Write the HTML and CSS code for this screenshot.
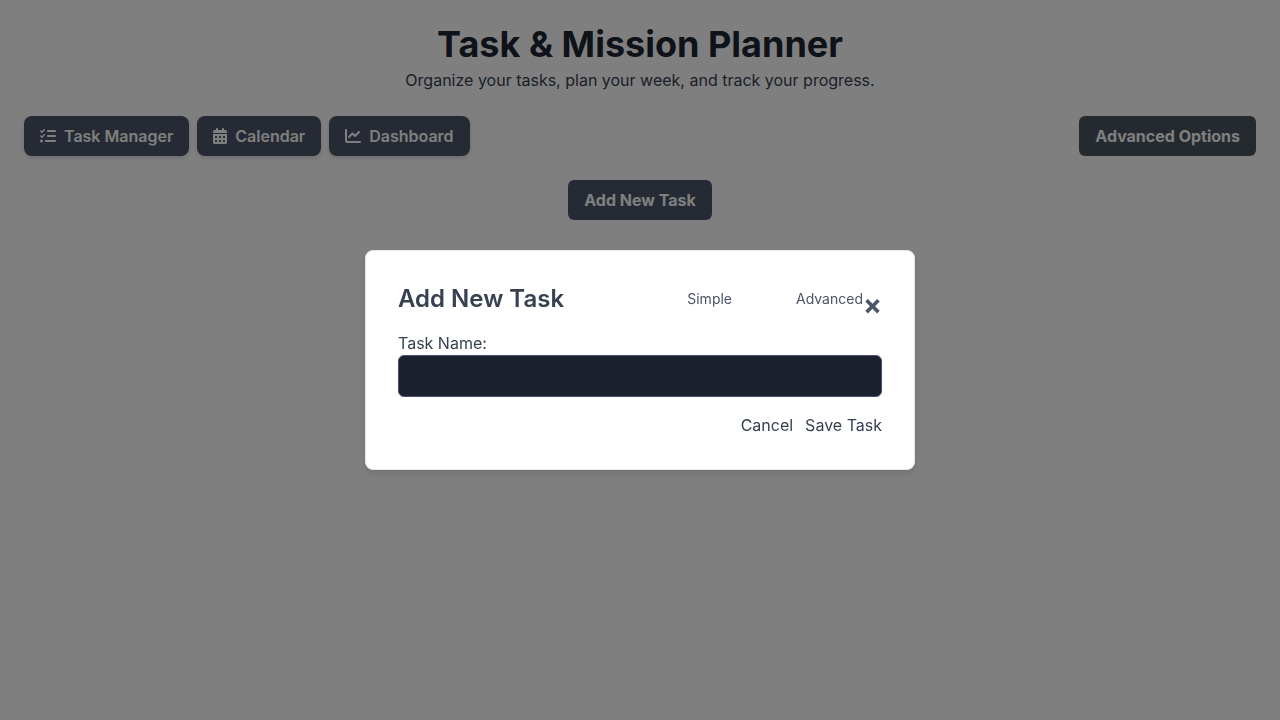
FILE: index.html
```html
<!DOCTYPE html>
<html lang="en">
<head>
<meta charset="utf-8">
<meta name="viewport" content="width=device-width, initial-scale=1">
<title>Task &amp; Mission Planner</title>
<link rel="stylesheet" href="styles.css">
</head>
<body>
<div class="page">
  <header class="page-header">
    <h1 class="page-title">Task &amp; Mission Planner</h1>
    <p class="page-subtitle">Organize your tasks, plan your week, and track your progress.</p>
  </header>
  <div class="toolbar">
    <nav class="tabs">
      <button class="btn tab" type="button">
        <svg class="icon" width="16" height="16" viewBox="0 0 512 512" aria-hidden="true"><path fill="currentColor" d="M152.1 38.200c9.900 8.900 10.700 24 1.800 33.900l-72 80c-4.400 4.900-10.600 7.800-17.200 7.900s-12.900-2.400-17.600-7L7 113C-2.300 103.600-2.300 88.400 7 79s24.600-9.400 33.900 0l22.100 22.100 55.100-61.200c8.900-9.900 24-10.700 33.900-1.800zm0 160c9.900 8.900 10.700 24 1.800 33.900l-72 80c-4.400 4.900-10.600 7.800-17.200 7.900s-12.900-2.400-17.600-7L7 273c-9.400-9.400-9.400-24.600 0-33.900s24.600-9.400 33.900 0l22.100 22.100 55.100-61.200c8.900-9.900 24-10.700 33.900-1.800zM224 96c0-17.700 14.300-32 32-32h224c17.700 0 32 14.300 32 32s-14.300 32-32 32H256c-17.700 0-32-14.300-32-32zm0 160c0-17.700 14.300-32 32-32h224c17.700 0 32 14.300 32 32s-14.300 32-32 32H256c-17.700 0-32-14.300-32-32zm-64 160c0-17.700 14.300-32 32-32h288c17.700 0 32 14.300 32 32s-14.300 32-32 32H192c-17.700 0-32-14.300-32-32zM48 368a48 48 0 1 1 0 96 48 48 0 1 1 0-96z"/></svg>
        <span>Task Manager</span>
      </button>
      <button class="btn tab" type="button">
        <svg class="icon" width="14" height="16" viewBox="0 0 448 512" aria-hidden="true"><path fill="currentColor" d="M128 0c17.700 0 32 14.300 32 32v32h128V32c0-17.700 14.300-32 32-32s32 14.300 32 32v32h48c26.500 0 48 21.500 48 48v48H0v-48c0-26.500 21.500-48 48-48h48V32c0-17.700 14.300-32 32-32zM0 192h448v272c0 26.500-21.500 48-48 48H48c-26.500 0-48-21.500-48-48V192zm64 80v32c0 8.800 7.200 16 16 16h32c8.800 0 16-7.200 16-16v-32c0-8.800-7.200-16-16-16H80c-8.800 0-16 7.200-16 16zm128 0v32c0 8.800 7.200 16 16 16h32c8.800 0 16-7.200 16-16v-32c0-8.800-7.200-16-16-16h-32c-8.800 0-16 7.200-16 16zm144-16c-8.800 0-16 7.200-16 16v32c0 8.800 7.200 16 16 16h32c8.800 0 16-7.200 16-16v-32c0-8.800-7.200-16-16-16h-32zM64 400v32c0 8.800 7.200 16 16 16h32c8.800 0 16-7.200 16-16v-32c0-8.800-7.200-16-16-16H80c-8.800 0-16 7.200-16 16zm144-16c-8.800 0-16 7.200-16 16v32c0 8.800 7.200 16 16 16h32c8.800 0 16-7.200 16-16v-32c0-8.800-7.200-16-16-16h-32zm112 16v32c0 8.800 7.200 16 16 16h32c8.800 0 16-7.200 16-16v-32c0-8.800-7.200-16-16-16h-32c-8.800 0-16 7.200-16 16z"/></svg>
        <span>Calendar</span>
      </button>
      <button class="btn tab" type="button">
        <svg class="icon" width="16" height="16" viewBox="0 0 512 512" aria-hidden="true"><path fill="currentColor" d="M64 64c0-17.700-14.300-32-32-32S0 46.300 0 64v336c0 44.200 35.800 80 80 80h400c17.700 0 32-14.300 32-32s-14.300-32-32-32H80c-8.800 0-16-7.200-16-16V64zm406.600 86.600c12.500-12.500 12.500-32.800 0-45.300s-32.800-12.500-45.300 0L320 210.700l-57.400-57.300c-12.500-12.500-32.800-12.500-45.300 0l-112 112c-12.500 12.500-12.500 32.800 0 45.300s32.800 12.500 45.300 0L240 221.300l57.400 57.300c12.500 12.500 32.800 12.500 45.300 0l128-128z"/></svg>
        <span>Dashboard</span>
      </button>
    </nav>
    <button class="btn btn-options" type="button">Advanced Options</button>
  </div>
  <main class="task-actions">
    <button class="btn" type="button">Add New Task</button>
  </main>
</div>

<div class="overlay">
  <form class="modal" role="dialog" aria-modal="true" aria-labelledby="modal-title">
    <div class="modal-header">
      <h2 class="modal-title" id="modal-title">Add New Task</h2>
      <div class="modal-modes">
        <div class="modes">
          <span>Simple</span>
          <span>Advanced</span>
        </div>
        <button class="modal-close" type="button" aria-label="Close">×</button>
      </div>
    </div>
    <div class="field">
      <label for="task-name">Task Name:</label>
      <input class="text-input" id="task-name" type="text">
    </div>
    <div class="modal-footer">
      <button class="link-button" type="button">Cancel</button>
      <button class="link-button" type="button">Save Task</button>
    </div>
  </form>
</div>
</body>
</html>
```
FILE: styles.css
```css
*,
*::before,
*::after {
  box-sizing: border-box;
}

body {
  margin: 0;
  background: #ffffff;
  color: #374151;
  font-family: Inter, "Liberation Sans", sans-serif;
  font-size: 16px;
  line-height: 24px;
}

h1,
h2,
p {
  margin: 0;
}

button,
input {
  font: inherit;
}

button {
  padding: 0;
  border: 0;
  background: none;
  color: inherit;
  cursor: pointer;
}

.page {
  display: flex;
  flex-direction: column;
  gap: 24px;
  padding: 24px;
}

.page-header {
  display: flex;
  flex-direction: column;
  gap: 4px;
  text-align: center;
}

.page-title {
  color: #1a2633;
  font-size: 36px;
  font-weight: 700;
  line-height: 40px;
}

.page-subtitle {
  color: #374151;
}

.toolbar {
  display: flex;
  align-items: center;
  justify-content: space-between;
}

.tabs {
  display: flex;
  gap: 8px;
}

.btn {
  padding: 8px 16px;
  border-radius: 6px;
  background: #4a5568;
  color: #ffffff;
  font-weight: 700;
}

.tab {
  display: flex;
  align-items: center;
  gap: 8px;
  border-radius: 8px;
  box-shadow: 0 2px 4px rgba(0, 0, 0, 0.15);
  font-weight: 600;
}

.btn-options {
  background: #4a5560;
}

.task-actions {
  display: flex;
  justify-content: center;
}

.overlay {
  position: fixed;
  inset: 0;
  display: flex;
  align-items: center;
  justify-content: center;
  background: rgba(0, 0, 0, 0.5);
}

.modal {
  width: 90%;
  max-width: 550px;
  padding: 32px;
  border: 1px solid #e2e8f0;
  border-radius: 8px;
  background: #ffffff;
  box-shadow: 0 4px 6px rgba(0, 0, 0, 0.1);
}

.modal-header {
  display: flex;
  align-items: center;
  justify-content: space-between;
  margin-bottom: 16px;
}

.modal-title {
  font-size: 24px;
  font-weight: 600;
  line-height: 32px;
}

.modal-modes {
  display: flex;
  align-items: center;
}

.modes {
  display: flex;
  gap: 64px;
  color: #4a5568;
  font-size: 14px;
}

.modal-close {
  padding-top: 12px;
  color: #4a5568;
  font-size: 28px;
  font-weight: 700;
  line-height: 20px;
}

.field {
  display: flex;
  flex-direction: column;
}

.text-input {
  width: 100%;
  height: 42px;
  padding: 8px;
  border: 1px solid #4a5568;
  border-radius: 6px;
  background: #1a202c;
  color: #e2e8f0;
}

.modal-footer {
  display: flex;
  justify-content: flex-end;
  gap: 12px;
  margin-top: 16px;
}
```
